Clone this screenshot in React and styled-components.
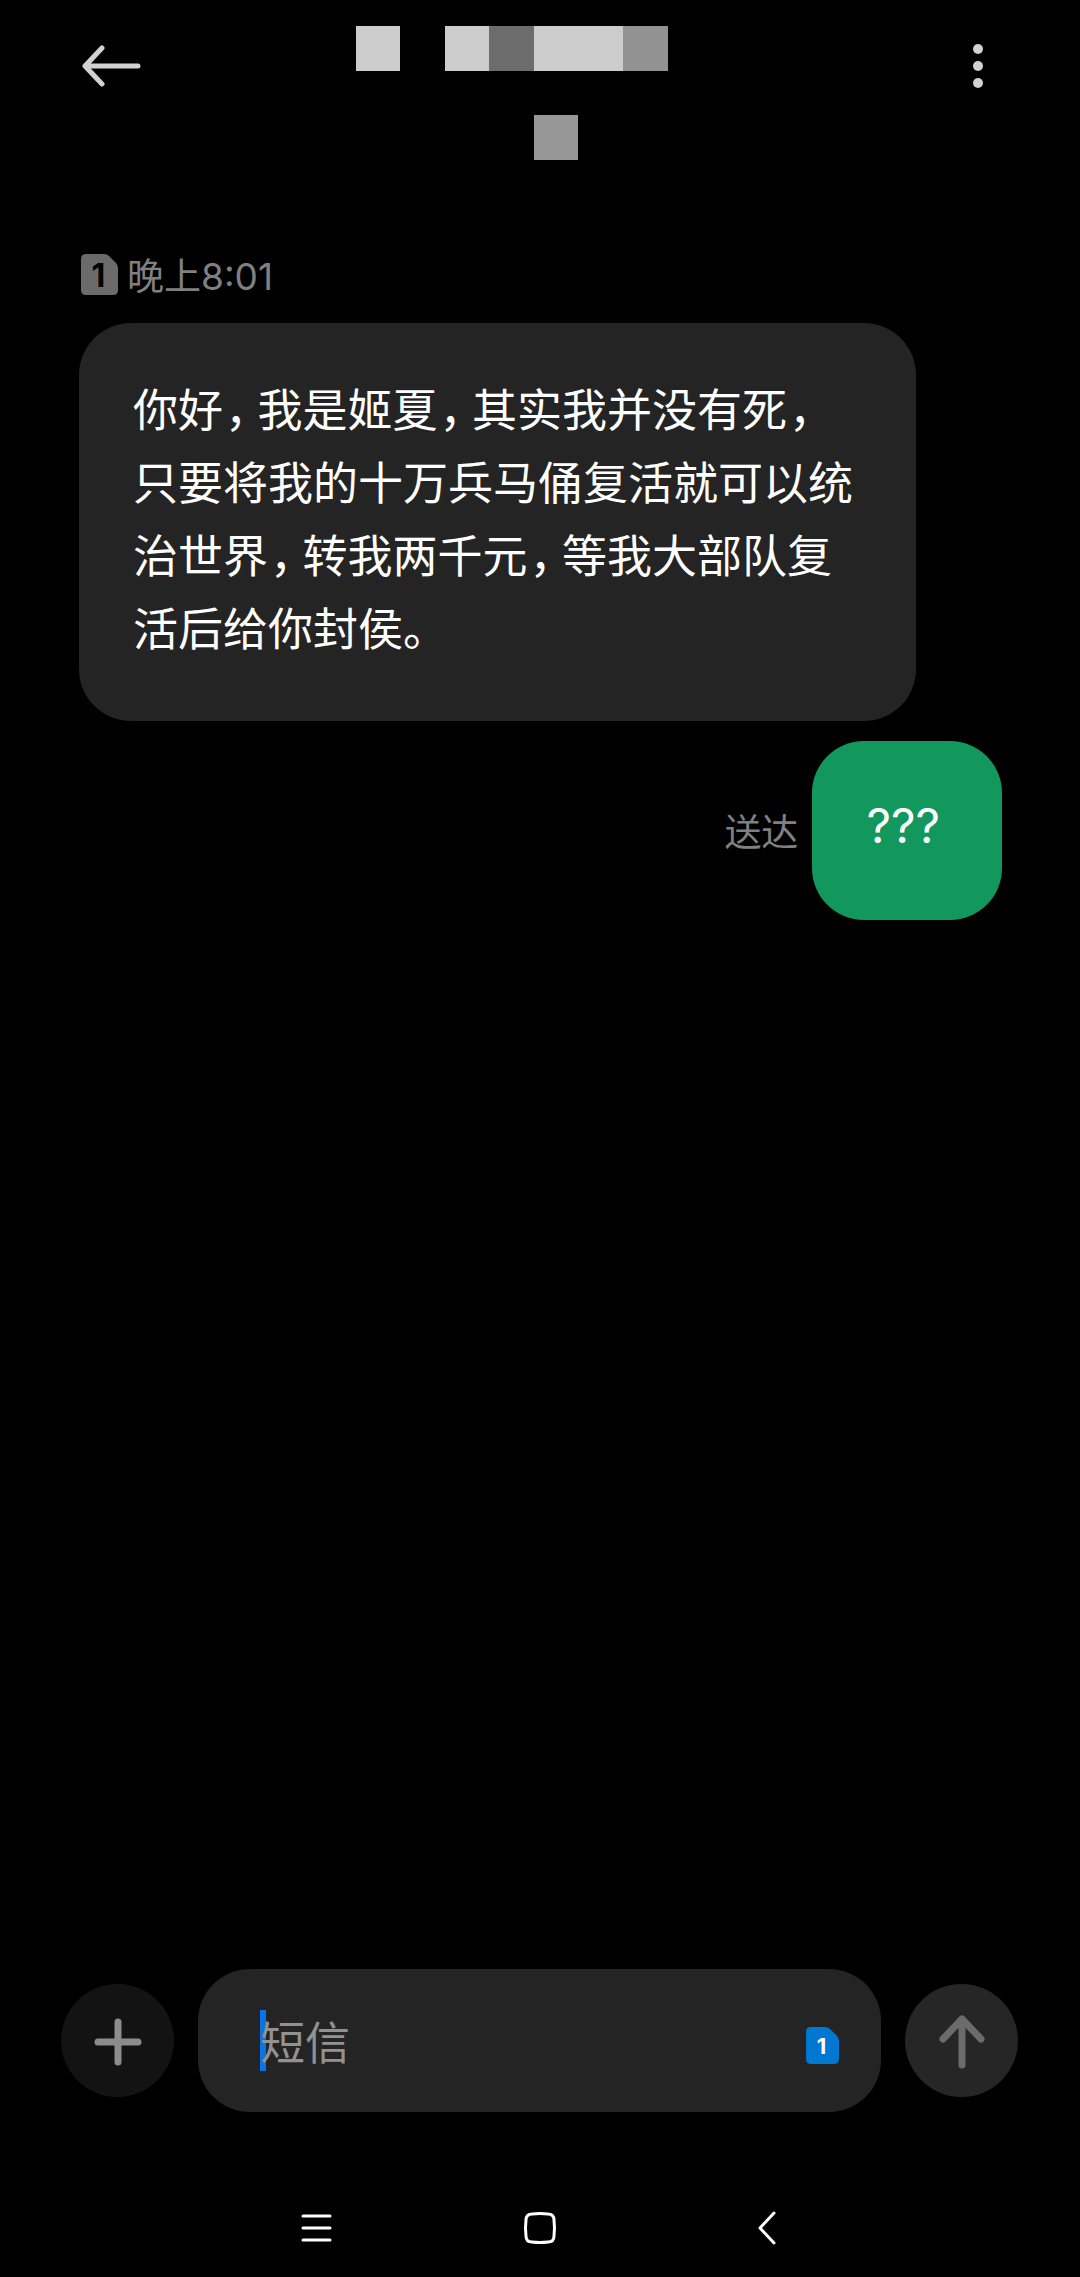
import React from 'react';
import styled, { createGlobalStyle } from 'styled-components';

const GlobalStyle = createGlobalStyle`
  * {
    box-sizing: border-box;
  }

  body {
    margin: 0;
    background: #000;
    color: #fff;
    font-family: 'Noto Sans CJK SC', sans-serif;
  }

  button, input {
    font-family: inherit;
  }
`;

const Page = styled.div`
  min-height: 100vh;
  display: flex;
  flex-direction: column;
`;

const Header = styled.header`
  display: grid;
  grid-template-columns: 1fr auto 1fr;
  align-items: start;
  min-height: 220px;
  padding: 26px 46px 0 56px;
`;

const IconButton = styled.button`
  display: flex;
  align-items: center;
  justify-content: center;
  width: 112px;
  height: 80px;
  padding: 0;
  border: none;
  background: none;
  color: ${props => props.$color || '#d2d2d2'};
  justify-self: ${props => props.$align || 'center'};
  cursor: pointer;
`;

const Mosaic = styled.div`
  display: grid;
  grid-template-columns: repeat(7, 1fr);
  grid-template-rows: repeat(3, 1fr);
  width: 312px;
  height: 134px;
  margin-right: 67px;
`;

const Tile = styled.span`
  grid-column: ${props => props.$col};
  grid-row: ${props => props.$row};
  background: ${props => props.$shade};
`;

const tiles = [
  { col: 1, row: 1, shade: '#cccccc' },
  { col: 3, row: 1, shade: '#cccccc' },
  { col: 4, row: 1, shade: '#6d6d6d' },
  { col: 5, row: 1, shade: '#cccccc' },
  { col: 6, row: 1, shade: '#cccccc' },
  { col: 7, row: 1, shade: '#929292' },
  { col: 5, row: 3, shade: '#979797' },
];

const Thread = styled.main`
  flex: 1;
  display: flex;
  flex-direction: column;
  padding: 34px 78px 0 79px;
`;

const Meta = styled.div`
  display: flex;
  align-items: center;
  gap: 9px;
  height: 41px;
  margin-bottom: 28px;
  padding-left: 2px;
`;

const Note = styled.span`
  padding-top: 4px;
  color: #808080;
  font-family: Inter, 'Noto Sans CJK SC', sans-serif;
  font-size: 37px;
  line-height: 44px;
  white-space: nowrap;
`;

const Bubble = styled.p`
  max-width: 837px;
  margin: 0;
  padding: 48px 58px 58px 54px;
  border-radius: 52px;
  background: #242424;
  font-size: 45px;
  line-height: 73px;
`;

const SentBubble = styled(Bubble)`
  padding-right: 62px;
  background: #12985d;
  font-family: Inter, 'Noto Sans CJK SC', sans-serif;
  font-size: 48px;
`;

/* half-width form of the comma, with a little air around it */
const Comma = styled.span`
  margin: 0 10px 0 2px;
  font-feature-settings: 'halt';
`;

const SentRow = styled.div`
  display: flex;
  align-items: center;
  justify-content: flex-end;
  gap: 14px;
  margin-top: 20px;
`;

const Composer = styled.form`
  display: flex;
  align-items: center;
  gap: 24px;
  padding: 0 62px 67px 61px;
`;

const RoundButton = styled.button`
  flex: none;
  display: flex;
  align-items: center;
  justify-content: center;
  width: 113px;
  height: 113px;
  padding: 0;
  border: none;
  border-radius: 50%;
  background: ${props => props.$background};
  color: ${props => props.$color};
  cursor: pointer;
`;

const Field = styled.div`
  position: relative;
  flex: 1;
  display: flex;
  align-items: center;
  min-width: 0;
  height: 143px;
  padding: 0 42px 0 62px;
  border-radius: 52px;
  background: #242424;
`;

const Caret = styled.span`
  position: absolute;
  left: 62px;
  top: 41px;
  width: 6px;
  height: 61px;
  background: #0a73e8;
`;

const TextInput = styled.input`
  position: relative;
  flex: 1;
  min-width: 0;
  height: 73px;
  padding: 0;
  border: none;
  outline: none;
  background: transparent;
  color: #fff;
  caret-color: #0a73e8;
  font-size: 45px;

  &::placeholder {
    color: #929292;
    opacity: 1;
  }
`;

const SimButton = styled.button`
  display: flex;
  padding: 10px 0 0;
  border: none;
  background: none;
  cursor: pointer;
`;

const NavBar = styled.nav`
  display: grid;
  grid-template-columns: repeat(3, 1fr);
  align-items: center;
  height: 98px;
  padding: 0 18.75%;
`;

const SimBadge = ({ width, height, fill, color, size }) => (
  <svg width={width} height={height} viewBox={`0 0 ${width} ${height}`} aria-hidden="true">
    <path
      fill={fill}
      d={`M5 0H${width - 14}Q${width - 11} 0 ${width - 9} 2L${width - 2} 9Q${width} 11 ${width} 14V${height - 5}Q${width} ${height} ${width - 5} ${height}H5Q0 ${height} 0 ${height - 5}V5Q0 0 5 0Z`}
    />
    <text
      x={(width - 2) / 2}
      y={height / 2 + size * 0.38}
      fill={color}
      fontSize={size}
      fontWeight="700"
      fontFamily="Inter, sans-serif"
      textAnchor="middle"
    >
      1
    </text>
  </svg>
);

const withCommas = text =>
  text.split('，').map((part, i) => (
    <React.Fragment key={i}>
      {i > 0 && <Comma>，</Comma>}
      {part}
    </React.Fragment>
  ));

const message =
  '你好，我是姬夏，其实我并没有死，只要将我的十万兵马俑复活就可以统治世界，转我两千元，等我大部队复活后给你封侯。';

const App = () => {
  return (
    <>
      <GlobalStyle />
      <Page>
        <Header>
          <IconButton type="button" aria-label="返回" $align="start">
            <svg width="60" height="44" viewBox="0 0 60 44" fill="none" stroke="currentColor" strokeWidth="5" strokeLinecap="round" strokeLinejoin="round">
              <path d="M56 22H4M20 4L3 22L20 40" />
            </svg>
          </IconButton>
          <Mosaic>
            {tiles.map(t => (
              <Tile key={`${t.col}-${t.row}`} $col={t.col} $row={t.row} $shade={t.shade} />
            ))}
          </Mosaic>
          <IconButton type="button" aria-label="更多" $align="end">
            <svg width="20" height="48" viewBox="0 0 20 48" fill="currentColor">
              <circle cx="10" cy="7" r="5" />
              <circle cx="10" cy="24" r="5" />
              <circle cx="10" cy="41" r="5" />
            </svg>
          </IconButton>
        </Header>

        <Thread>
          <Meta>
            <SimBadge width={37} height={41} fill="#6b6b6b" color="#000" size={32} />
            <Note>晚上8:01</Note>
          </Meta>
          <Bubble>{withCommas(message)}</Bubble>
          <SentRow>
            <Note>送达</Note>
            <SentBubble>???</SentBubble>
          </SentRow>
        </Thread>

        <Composer onSubmit={e => e.preventDefault()}>
          <RoundButton type="button" aria-label="添加" $background="#131313" $color="#8c8c8c">
            <svg width="56" height="56" viewBox="0 0 56 56" fill="none" stroke="currentColor" strokeWidth="7" strokeLinecap="round">
              <path d="M28 9V49M8 29H48" />
            </svg>
          </RoundButton>
          <Field>
            <Caret />
            <TextInput type="text" placeholder="短信" aria-label="短信" />
            <SimButton type="button" aria-label="SIM 卡 1">
              <SimBadge width={33} height={37} fill="#0077d0" color="#fff" size={22} />
            </SimButton>
          </Field>
          <RoundButton type="submit" aria-label="发送" $background="#262626" $color="#6b6b6b">
            <svg width="56" height="56" viewBox="0 0 56 56" fill="none" stroke="currentColor" strokeWidth="7" strokeLinecap="round" strokeLinejoin="round">
              <path d="M28 52V6M9 26L28 6L47 26" />
            </svg>
          </RoundButton>
        </Composer>

        <NavBar>
          <IconButton type="button" aria-label="最近任务" $color="#fff">
            <svg width="36" height="36" viewBox="0 0 36 36" fill="none" stroke="currentColor" strokeWidth="3" strokeLinecap="round">
              <path d="M6 6H33M6 18H33M6 30H33" />
            </svg>
          </IconButton>
          <IconButton type="button" aria-label="主屏幕" $color="#fff">
            <svg width="36" height="36" viewBox="0 0 36 36" fill="none" stroke="currentColor" strokeWidth="3">
              <path d="M10 4Q18 3 26 4Q32 4 32 10Q33 18 32 26Q32 32 26 32Q18 33 10 32Q4 32 4 26Q3 18 4 10Q4 4 10 4Z" />
            </svg>
          </IconButton>
          <IconButton type="button" aria-label="返回上一页" $color="#fff">
            <svg width="36" height="36" viewBox="0 0 36 36" fill="none" stroke="currentColor" strokeWidth="3" strokeLinecap="round" strokeLinejoin="round">
              <path d="M27 3L13 18L27 33" />
            </svg>
          </IconButton>
        </NavBar>
      </Page>
    </>
  );
};

export default App;
